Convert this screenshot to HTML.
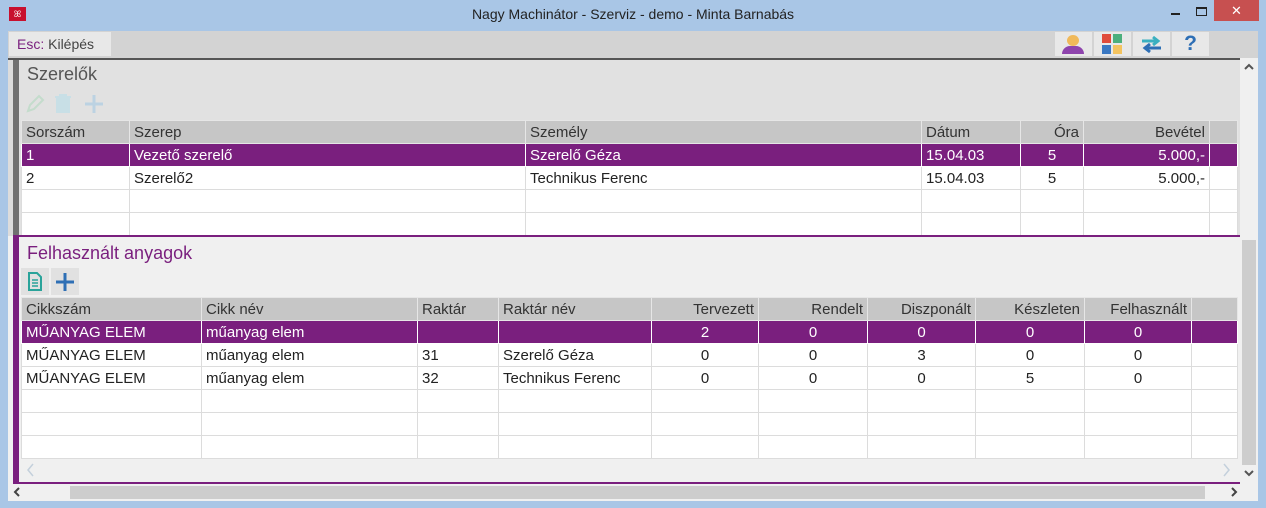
<!DOCTYPE html><html><head><style>
*{margin:0;padding:0;box-sizing:border-box}
body{width:1266px;height:508px;background:#a9c6e6;font-family:"Liberation Sans",sans-serif;position:relative;overflow:hidden;font-size:15px;color:#222}
.a{position:absolute}
table{border-collapse:collapse;position:absolute;table-layout:fixed}
td{border:1px solid #dcdcdc;height:23px;padding:0 4px;white-space:nowrap;overflow:hidden;background:#fff}
tr.h td{background:#c6c6c6;border-color:#e6e6e6;color:#333}
tr.s td{background:#7a1f7e;color:#fff;border-color:#fff}
.r{text-align:right}.c{text-align:center}
</style></head><body>
<div class="a" style="top:7px;left:9px;width:17px;height:14px;background:#c8102e;color:#fff;font-size:9px;line-height:14px;text-align:center">ꕤ</div>
<div class="a" style="left:0;width:1266px;top:6px;text-align:center;font-size:14px;color:#222">Nagy Machinátor - Szerviz - demo - Minta Barnabás</div>
<div class="a" style="left:1171px;top:13px;width:9px;height:2px;background:#222"></div>
<div class="a" style="left:1196px;top:7px;width:11px;height:9px;border:1px solid #222;border-top-width:2px"></div>
<div class="a" style="left:1214px;top:0;width:45px;height:21px;background:#c75050;color:#fff;text-align:center;line-height:21px;font-size:13px">✕</div>
<div class="a" style="left:8px;top:31px;width:1250px;height:470px;background:#f0f0f0"></div>
<div class="a" style="left:8px;top:31px;width:1250px;height:27px;background:#d3d3d3"></div>
<div class="a" style="left:9px;top:32px;width:102px;height:24px;background:#e8e8e8;font-size:14px;line-height:24px;padding-left:8px;color:#444"><span style="color:#7a1f7e">Esc:</span> Kilépés</div>
<div class="a" style="left:1055px;top:32px;width:37px;height:24px;background:#e8e8e8"><div class="a" style="left:12px;top:3px;width:12px;height:11px;border-radius:50%;background:#f0b95a"></div><div class="a" style="left:7px;top:14px;width:22px;height:8px;border-radius:8px 8px 0 0;background:#8e44ad"></div></div>
<div class="a" style="left:1094px;top:32px;width:37px;height:24px;background:#e8e8e8"><div class="a" style="left:8px;top:2px;width:9px;height:9px;background:#e04b3a"></div><div class="a" style="left:19px;top:2px;width:9px;height:9px;background:#4caf7d"></div><div class="a" style="left:8px;top:13px;width:9px;height:9px;background:#3a78c2"></div><div class="a" style="left:19px;top:13px;width:9px;height:9px;background:#f3c35f"></div></div>
<div class="a" style="left:1133px;top:32px;width:37px;height:24px;background:#e8e8e8">
<svg width="37" height="24"><path d="M9 9h16M20 5l5 4-5 4" stroke="#3ab0c0" stroke-width="3" fill="none"/><path d="M28 16H12M17 12l-5 4 5 4" stroke="#2e6fb5" stroke-width="3" fill="none"/></svg></div>
<div class="a" style="left:1172px;top:32px;width:37px;height:24px;background:#e8e8e8;color:#2e6fb5;font-size:21px;line-height:24px;text-align:center;font-weight:bold">?</div>
<div class="a" style="left:8px;top:58px;width:1232px;height:2px;background:#555"></div>
<div class="a" style="left:8px;top:60px;width:5px;height:176px;background:#dcdcdc"></div>
<div class="a" style="left:13px;top:60px;width:6px;height:176px;background:#707070"></div>
<div class="a" style="left:19px;top:60px;width:1221px;height:176px;background:#e1e1e1"></div>
<div class="a" style="left:27px;top:64px;font-size:18px;color:#555">Szerelők</div>
<svg class="a" style="left:24px;top:92px" width="80" height="24"><path d="M4 19l2-6 9-9 4 4-9 9z" stroke="#c4dccc" stroke-width="2" fill="none"/><path d="M31 5h16M36 5v-2h6v2M33 7h12v13H33z" stroke="#c8dfe6" stroke-width="2" fill="#c8dfe6"/><path d="M70 3v18M61 12h18" stroke="#bcd2e2" stroke-width="3"/></svg>
<table style="left:21px;top:120px;width:1216px">
<colgroup><col style="width:108px"><col style="width:396px"><col style="width:396px"><col style="width:99px"><col style="width:63px"><col style="width:126px"><col style="width:28px"></colgroup>
<tr class="h"><td>Sorszám</td><td>Szerep</td><td>Személy</td><td>Dátum</td><td class="r">Óra</td><td class="r">Bevétel</td><td></td></tr>
<tr class="s"><td>1</td><td>Vezető szerelő</td><td>Szerelő Géza</td><td>15.04.03</td><td class="c">5</td><td class="r">5.000,-</td><td></td></tr>
<tr><td>2</td><td>Szerelő2</td><td>Technikus Ferenc</td><td>15.04.03</td><td class="c">5</td><td class="r">5.000,-</td><td></td></tr>
<tr><td></td><td></td><td></td><td></td><td></td><td></td><td></td></tr>
<tr><td></td><td></td><td></td><td></td><td></td><td></td><td></td></tr>
</table>
<div class="a" style="left:1240px;top:58px;width:18px;height:425px;background:#f0f0f0"></div>
<svg class="a" style="left:1244px;top:62px" width="10" height="10"><path d="M1 7l4-4 4 4" stroke="#555" stroke-width="2" fill="none"/></svg>
<div class="a" style="left:1242px;top:240px;width:14px;height:225px;background:#cdcdcd"></div>
<svg class="a" style="left:1244px;top:468px" width="10" height="10"><path d="M1 3l4 4 4-4" stroke="#555" stroke-width="2" fill="none"/></svg>
<div class="a" style="left:13px;top:235px;width:1227px;height:2px;background:#7a1f7e"></div>
<div class="a" style="left:13px;top:237px;width:6px;height:247px;background:#7a1f7e"></div>
<div class="a" style="left:19px;top:237px;width:1221px;height:245px;background:#f0f0f0"></div>
<div class="a" style="left:19px;top:482px;width:1221px;height:2px;background:#7a1f7e"></div>
<div class="a" style="left:27px;top:243px;font-size:18px;color:#7a1f7e">Felhasznált anyagok</div>
<div class="a" style="left:21px;top:268px;width:28px;height:27px;background:#e1e1e1"><svg width="28" height="27"><path d="M8 5h8l4 4v13H8z" stroke="#2aa39a" stroke-width="2" fill="none"/><path d="M11 12h6M11 15h6M11 18h6" stroke="#2aa39a" stroke-width="1.5"/></svg></div>
<div class="a" style="left:51px;top:268px;width:28px;height:27px;background:#e1e1e1"><svg width="28" height="27"><path d="M14 5v18M5 14h18" stroke="#2e6fb5" stroke-width="3"/></svg></div>
<table style="left:21px;top:297px;width:1216px">
<colgroup><col style="width:180px"><col style="width:216px"><col style="width:81px"><col style="width:153px"><col style="width:107px"><col style="width:109px"><col style="width:108px"><col style="width:109px"><col style="width:107px"><col style="width:46px"></colgroup>
<tr class="h"><td>Cikkszám</td><td>Cikk név</td><td>Raktár</td><td>Raktár név</td><td class="r">Tervezett</td><td class="r">Rendelt</td><td class="r">Diszponált</td><td class="r">Készleten</td><td class="r">Felhasznált</td><td></td></tr>
<tr class="s"><td>MŰANYAG ELEM</td><td>műanyag elem</td><td></td><td></td><td class="c">2</td><td class="c">0</td><td class="c">0</td><td class="c">0</td><td class="c">0</td><td></td></tr>
<tr><td>MŰANYAG ELEM</td><td>műanyag elem</td><td>31</td><td>Szerelő Géza</td><td class="c">0</td><td class="c">0</td><td class="c">3</td><td class="c">0</td><td class="c">0</td><td></td></tr>
<tr><td>MŰANYAG ELEM</td><td>műanyag elem</td><td>32</td><td>Technikus Ferenc</td><td class="c">0</td><td class="c">0</td><td class="c">0</td><td class="c">5</td><td class="c">0</td><td></td></tr>
<tr><td></td><td></td><td></td><td></td><td></td><td></td><td></td><td></td><td></td><td></td></tr>
<tr><td></td><td></td><td></td><td></td><td></td><td></td><td></td><td></td><td></td><td></td></tr>
<tr><td></td><td></td><td></td><td></td><td></td><td></td><td></td><td></td><td></td><td></td></tr>
</table>
<svg class="a" style="left:26px;top:462px" width="10" height="16"><path d="M7 2L2 8l5 6" stroke="#c4d0dc" stroke-width="1.5" fill="none"/></svg>
<svg class="a" style="left:1221px;top:462px" width="10" height="16"><path d="M3 2l5 6-5 6" stroke="#c4d0dc" stroke-width="1.5" fill="none"/></svg>
<div class="a" style="left:8px;top:484px;width:1232px;height:17px;background:#f0f0f0"></div>
<svg class="a" style="left:12px;top:487px" width="10" height="10"><path d="M7 1L3 5l4 4" stroke="#444" stroke-width="2" fill="none"/></svg>
<div class="a" style="left:70px;top:486px;width:1135px;height:13px;background:#cdcdcd"></div>
<svg class="a" style="left:1229px;top:487px" width="10" height="10"><path d="M3 1l4 4-4 4" stroke="#444" stroke-width="2" fill="none"/></svg>
</body></html>
